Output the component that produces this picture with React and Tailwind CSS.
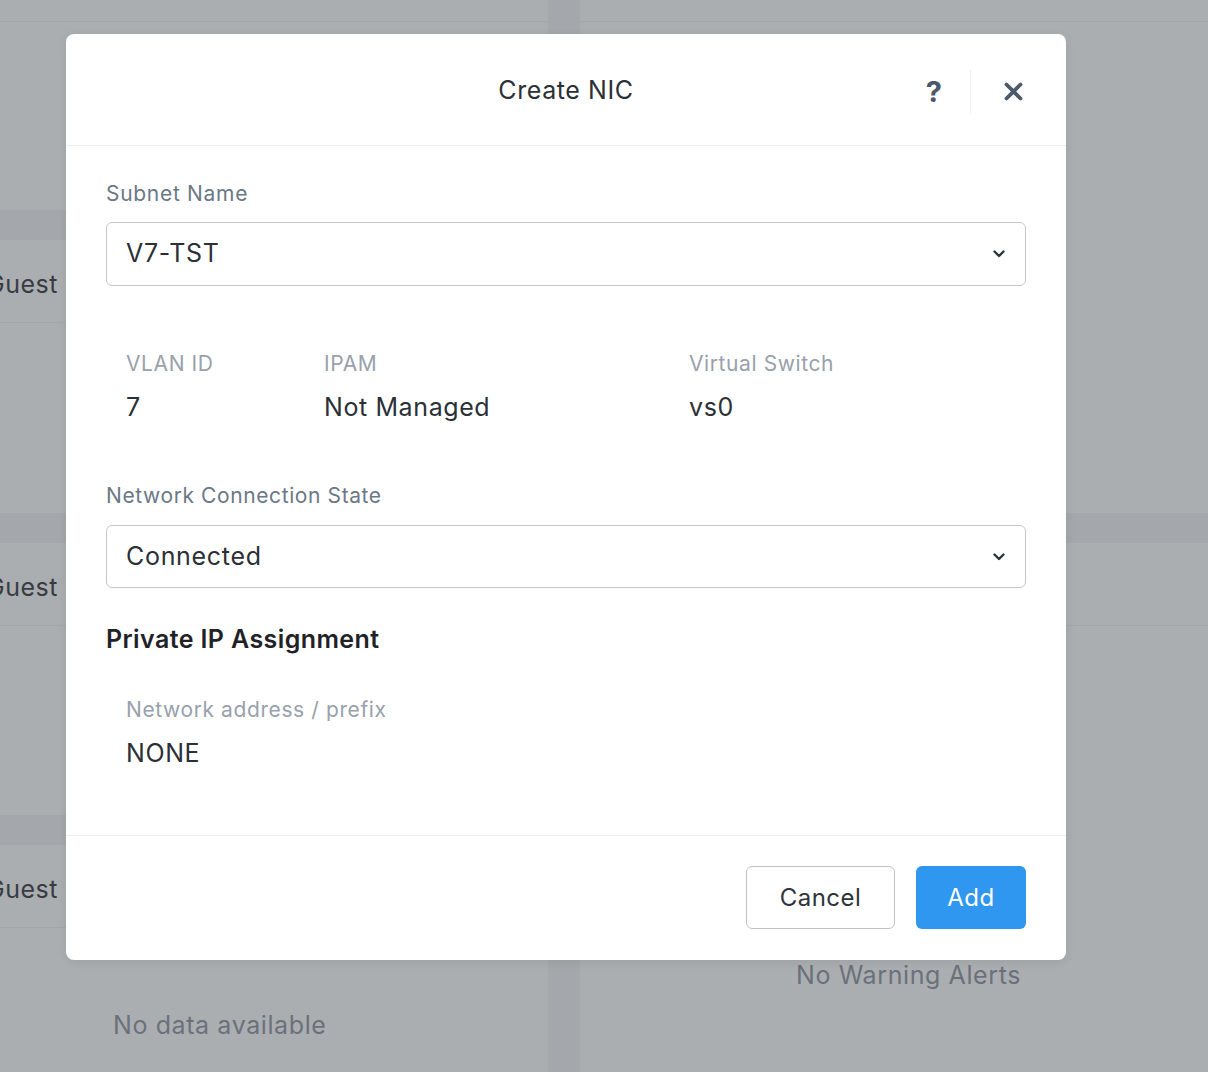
import React from 'react';

function Chevron() {
  return (
    <svg width="12" height="8" viewBox="0 0 12 8" fill="none">
      <polyline points="1.5,1.5 6,6 10.5,1.5" stroke="#2f343a" strokeWidth="2.4" strokeLinecap="round" strokeLinejoin="round" />
    </svg>
  );
}

function CloseIcon() {
  return (
    <svg width="21" height="21" viewBox="0 0 21 21" fill="none">
      <path d="M3.5 3.5 L17.5 17.5 M17.5 3.5 L3.5 17.5" stroke="#4b596b" strokeWidth="3.8" strokeLinecap="round" />
    </svg>
  );
}

function Select({ value, className = '' }) {
  return (
    <div className={`flex items-center justify-between rounded-[6px] border-[1.5px] border-[#c4c8cd] bg-white pl-[19px] pr-[20px] ${className}`}>
      <span className="text-[25px] tracking-[0.7px] text-[#2b3036]">{value}</span>
      <Chevron />
    </div>
  );
}

function GuestRow() {
  return (
    <>
      <div className="h-[30px] bg-[#a4a7ab]" />
      <div className="flex h-[83px] items-center border-b border-[#a3a6aa] pt-[8px]">
        <div className="flex w-[58px] justify-end whitespace-nowrap text-[25px] tracking-[0.5px] text-[#383c42]">Guest</div>
      </div>
    </>
  );
}

function Field({ label, value, labelClass = 'text-[#98a1ac]' }) {
  return (
    <div>
      <div className={`text-[21px] leading-[28px] tracking-[0.6px] ${labelClass}`}>{label}</div>
      <div className="mt-[12px] text-[25px] leading-[34px] tracking-[0.6px] text-[#2b3036]">{value}</div>
    </div>
  );
}

export default function App() {
  return (
    <div className="relative h-[1072px] overflow-hidden bg-[#abaeb1] font-['Inter','Noto_Sans',sans-serif]">
      {/* page behind the overlay */}
      <div className="flex h-full">
        <div className="w-[548px]">
          <div className="h-[21px]" />
          <div className="h-[189px] border-t border-[#a3a6aa]" />
          <GuestRow />
          <div className="h-[190px]" />
          <GuestRow />
          <div className="h-[189px]" />
          <GuestRow />
          <div className="mt-[80px] pl-[113px] text-[25px] leading-[34px] tracking-[0.6px] text-[#6b717a]">No data available</div>
        </div>
        <div className="w-[32px] bg-[#a4a7ab]" />
        <div className="flex-1">
          <div className="h-[21px]" />
          <div className="h-[492px] border-t border-[#a3a6aa]" />
          <div className="h-[30px] bg-[#a4a7ab]" />
          <div className="h-[83px] border-b border-[#a3a6aa]" />
          <div className="mt-[332px] pl-[216px] text-[25px] leading-[34px] tracking-[0.6px] text-[#6b717a]">No Warning Alerts</div>
        </div>
      </div>

      {/* modal */}
      <div className="absolute left-[66px] top-[34px] flex h-[926px] w-[1000px] flex-col rounded-[8px] bg-white shadow-[0_2px_10px_rgba(0,0,0,0.08)]">
        <div className="grid h-[112px] grid-cols-[1fr_auto_1fr] items-center border-b border-[#eceff2] pl-[42px] pr-[42px]">
          <div />
          <div className="pt-[3px] text-[25px] tracking-[0.6px] text-[#2b3036]">Create NIC</div>
          <div className="flex items-center justify-end pt-[4px]">
            <span className="text-[29px] font-bold leading-none text-[#4b596b]">?</span>
            <div className="ml-[28px] mr-[32px] h-[43px] w-px bg-[#eceff2]" />
            <CloseIcon />
          </div>
        </div>

        <div className="flex-1 px-[40px] pt-[34px]">
          <div className="text-[21px] leading-[28px] tracking-[0.7px] text-[#6b7886]">Subnet Name</div>
          <Select value="V7-TST" className="mt-[14px] h-[64px]" />

          <div className="mt-[64px] flex pl-[20px]">
            <div className="w-[198px]"><Field label="VLAN ID" value="7" /></div>
            <div className="w-[365px]"><Field label="IPAM" value="Not Managed" /></div>
            <div className="flex-1"><Field label="Virtual Switch" value="vs0" /></div>
          </div>

          <div className="mt-[58px] text-[21px] leading-[28px] tracking-[0.6px] text-[#6b7886]">Network Connection State</div>
          <Select value="Connected" className="mt-[15px] h-[63px]" />

          <div className="mt-[35px] text-[25px] font-semibold leading-[32px] tracking-[0.4px] text-[#1f2328]">Private IP Assignment</div>

          <div className="mt-[41px] pl-[20px]">
            <Field label="Network address / prefix" value="NONE" />
          </div>
        </div>

        <div className="flex h-[125px] justify-end gap-[21px] border-t border-[#eceff2] px-[40px] pt-[30px]">
          <button className="h-[63px] w-[149px] rounded-[6px] border-[1.5px] border-[#c0c4c9] bg-white text-[24px] tracking-[0.5px] text-[#2f343a]">Cancel</button>
          <button className="h-[63px] w-[110px] rounded-[6px] bg-[#2f97f0] text-[24px] tracking-[0.5px] text-white">Add</button>
        </div>
      </div>
    </div>
  );
}
